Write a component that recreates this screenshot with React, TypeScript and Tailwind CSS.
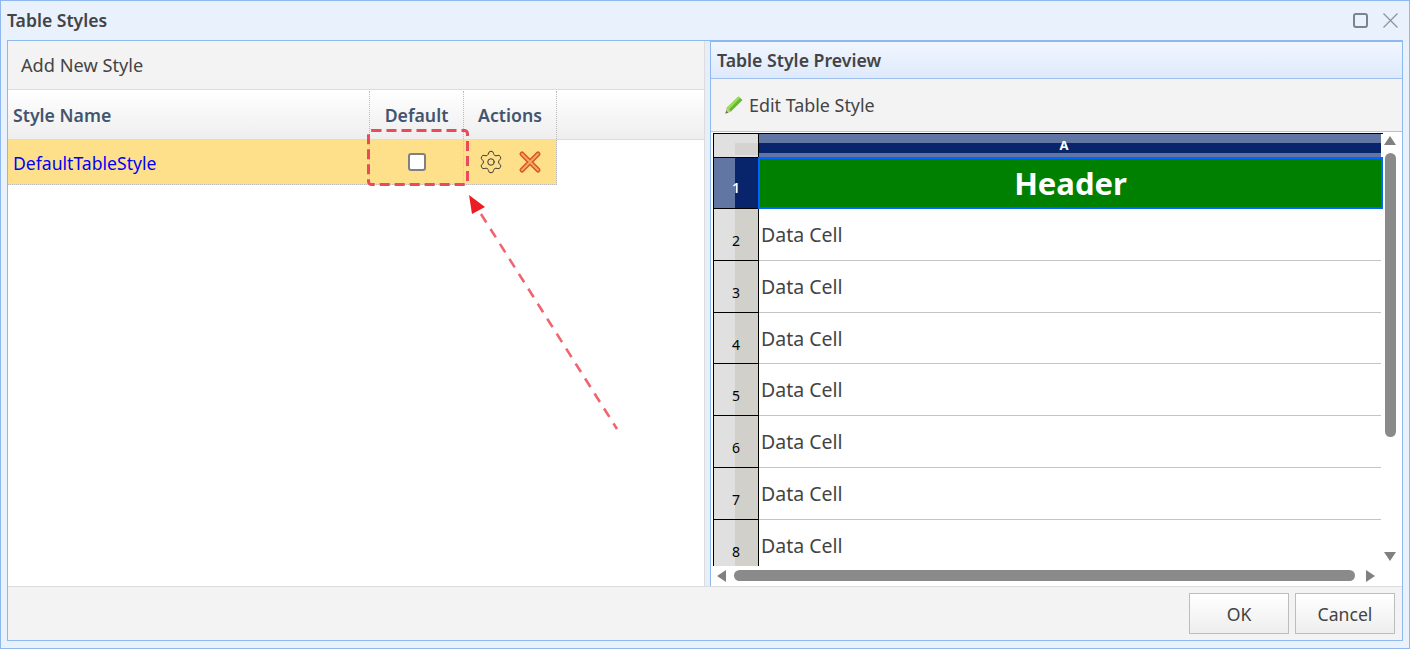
import React from "react";
import { Settings } from "lucide-react";

const rows = [2, 3, 4, 5, 6, 7, 8];

function Pencil() {
  return (
    <svg width="20" height="20" viewBox="0 0 20 20" className="shrink-0">
      <path d="M1.5 18.5 L3 12.5 L14.5 1.5 L18.5 5 L7 16.5 Z" fill="#66b82e" />
      <path d="M3 12.5 L14.5 1.5 L16 3 L5 14.5 Z" fill="#9bdc5a" />
      <path d="M1.5 18.5 L3 12.5 L7 16.5 Z" fill="#c9c39a" />
      <path d="M1.5 18.5 L2.2 15.8 L4.2 17.7 Z" fill="#5a6a50" />
    </svg>
  );
}

function RedX() {
  return (
    <svg width="24" height="24" viewBox="0 0 24 24">
      <path d="M4 4 L20 20 M20 4 L4 20" stroke="#d9561f" strokeWidth="5" strokeLinecap="round" />
      <path d="M4 4 L20 20 M20 4 L4 20" stroke="#f4a663" strokeWidth="2" strokeLinecap="round" />
    </svg>
  );
}

export default function App() {
  return (
    <div className="relative flex h-[649px] w-[1410px] flex-col overflow-hidden border border-[#8fb9ee] bg-[#e9f1fd] font-['Noto_Sans','Open_Sans',sans-serif] text-[#444]">
      <div className="flex h-[39px] shrink-0 items-center justify-between pb-[1px] pl-[6px] pr-[11px]">
        <span className="text-[17.6px] font-semibold text-[#444]">Table Styles</span>
        <div className="flex items-center gap-[15px]">
          <div className="h-[15px] w-[15px] rounded-[3px] border-2 border-[#7b848e]" />
          <svg width="15" height="15" viewBox="0 0 15 15">
            <path d="M0.5 0.5 L14.5 14.5 M14.5 0.5 L0.5 14.5" stroke="#8a929a" strokeWidth="1.2" />
          </svg>
        </div>
      </div>

      <div className="mx-[6px] flex h-[601px] w-[1396px] flex-col border border-[#8fb9ee] bg-white">
        <div className="flex min-h-0 flex-1">
          <div className="flex w-[696px] shrink-0 flex-col bg-white">
            <div className="flex h-[49px] shrink-0 items-center border-b border-[#dcdcdc] bg-[#f3f3f3] pl-[13px] pt-[1px]">
              <span className="text-[18.2px] text-[#444]">Add New Style</span>
            </div>
            <div className="flex h-[50px] shrink-0 border-b border-[#dcdcdc] bg-gradient-to-b from-white to-[#eeeeee] pt-[1px] text-[17.7px] font-semibold text-[#44546f]">
              <div className="flex w-[362px] items-center border-r border-dotted border-[#bbb] pl-[5px]">Style Name</div>
              <div className="flex w-[94px] items-center justify-center border-r border-dotted border-[#bbb]">Default</div>
              <div className="flex w-[93px] items-center justify-center border-r border-dotted border-[#bbb]">Actions</div>
            </div>
            <div className="flex h-[45px] w-[549px] shrink-0 border-b border-r border-dotted border-[#bbb] bg-[#ffe08a]">
              <div className="flex w-[362px] items-center border-r border-dotted border-[#ccb] pl-[5px] pt-[2px] text-[17.6px] text-[#0000ff]">DefaultTableStyle</div>
              <div className="flex w-[94px] items-center justify-center border-r border-dotted border-[#ccb]">
                <div className="h-[18px] w-[18px] rounded-[3px] border-2 border-[#808080] bg-white" />
              </div>
              <div className="flex flex-1 items-center justify-center gap-[14px]">
                <Settings size={26} strokeWidth={0.9} color="#333" className="-mt-[1px]" />
                <RedX />
              </div>
            </div>
          </div>

          <div className="w-[6px] shrink-0 border-l border-[#dcdcdc] bg-[#e6eefb]" />

          <div className="flex min-w-0 flex-1 flex-col border-l border-t border-[#8fb9ee] bg-white">
            <div className="flex h-[37px] shrink-0 items-center border-b border-[#9dc0ee] bg-gradient-to-b from-[#f1f6fe] to-[#deeafc] pl-[6px] text-[17.7px] font-semibold text-[#444]">
              Table Style Preview
            </div>
            <div className="flex h-[53px] shrink-0 items-center gap-[5px] border-b border-[#a9c6ee] bg-[#f3f3f3] pl-[13px] text-[17.9px] text-[#444]">
              <Pencil />
              <span>Edit Table Style</span>
            </div>
            <div className="flex min-h-0 flex-1 flex-col pl-[2px] pt-[1px]">
              <div className="flex min-h-0 flex-1">
                <div className="h-[433px] w-[670px] shrink-0 overflow-hidden border-l border-t border-black">
                  <div className="flex h-[23px] w-[667px]">
                    <div className="flex h-[23px] w-[45px] shrink-0 flex-col border-r border-black bg-[#e0e0e0]">
                      <div className="h-[9px]" />
                      <div className="ml-[21px] h-[12px] bg-[#d5d3cf]" />
                    </div>
                    <div className="relative flex h-[23px] flex-1 flex-col">
                      <div className="h-[9px] bg-[#6276a3]" />
                      <div className="h-[10px] bg-[#08246b]" />
                      <div className="h-[4px] bg-[#6276a3]" />
                      <span className="absolute inset-0 flex items-center justify-center pb-[1px] pr-[12px] text-[13px] font-bold leading-none text-white">A</span>
                    </div>
                  </div>
                  <div className="flex h-[52px] w-[669px]">
                    <div className="flex w-[44px] shrink-0 border-b border-t border-black bg-[linear-gradient(to_right,#6276a3_0,#6276a3_21px,#08246b_21px)]">
                      <span className="mt-[20px] w-full text-center text-[14px] font-semibold leading-[20px] text-white">1</span>
                    </div>
                    <div className="flex flex-1 items-center justify-center border-2 border-[#0066ff] bg-[#008000] text-[31px] font-bold text-white">
                      Header
                    </div>
                  </div>
                  {rows.map((n) => (
                    <div key={n} className="flex h-[51.75px] w-[667px]">
                      <div className="flex w-[45px] shrink-0 border-b border-r border-black bg-[linear-gradient(to_right,#e0e0e0_0,#e0e0e0_21px,#d2d0cb_21px)]">
                        <span className="mt-[22px] w-full text-center text-[14px] leading-[20px] text-black">{n}</span>
                      </div>
                      <div className="flex flex-1 items-start border-b border-[#c4c4c4] pl-[2px] pt-[11px] text-[19.5px] leading-[30px] text-[#444]">
                        Data Cell
                      </div>
                    </div>
                  ))}
                </div>
                <div className="flex h-[433px] w-[14px] shrink-0 flex-col items-center pt-[3px]">
                  <svg width="14" height="9" viewBox="0 0 14 9" className="shrink-0"><path d="M7 0 L13 9 L1 9 Z" fill="#808080" /></svg>
                  <div className="mt-[8px] h-[284px] w-[11px] shrink-0 rounded-full bg-[#8a8a8a]" />
                  <svg width="14" height="9" viewBox="0 0 14 9" className="mt-[115px] shrink-0"><path d="M1 0 L13 0 L7 9 Z" fill="#808080" /></svg>
                </div>
              </div>
              <div className="flex h-[19px] shrink-0 items-start pl-[4px] pt-[3px]">
                <svg width="9" height="12" viewBox="0 0 9 12" className="shrink-0"><path d="M9 0 L9 12 L0 6 Z" fill="#808080" /></svg>
                <div className="ml-[8px] h-[11px] w-[621px] shrink-0 rounded-full bg-[#8a8a8a]" />
                <svg width="9" height="12" viewBox="0 0 9 12" className="ml-[11px] shrink-0"><path d="M0 0 L9 6 L0 12 Z" fill="#808080" /></svg>
              </div>
            </div>
          </div>
        </div>

        <div className="flex h-[54px] shrink-0 items-start justify-end gap-[6px] border-t border-[#dcdcdc] bg-[#f3f3f3] pr-[7px] pt-[6px] text-[17.6px] text-[#444]">
          <button className="h-[41px] w-[100px] border border-[#bdbdbd] bg-gradient-to-b from-white to-[#eeeeee] pt-[1px]">OK</button>
          <button className="h-[41px] w-[100px] border border-[#bdbdbd] bg-gradient-to-b from-white to-[#eeeeee] pt-[1px]">Cancel</button>
        </div>
      </div>

      <svg className="pointer-events-none absolute left-[364px] top-[126px]" width="108" height="62" viewBox="0 0 108 62">
        <rect x="3.5" y="3.5" width="99" height="54" rx="3" fill="none" stroke="#ea4a5a" strokeWidth="3" strokeDasharray="10 5" />
      </svg>
      <svg className="pointer-events-none absolute left-[459px] top-[184px]" width="170" height="250" viewBox="0 0 170 250">
        <path d="M21 29 L157 244" stroke="#f0646f" strokeWidth="2.6" strokeDasharray="10 7.7" />
        <path d="M9 10 L25 22 L12 29 Z" fill="#ed1c24" />
      </svg>
    </div>
  );
}
